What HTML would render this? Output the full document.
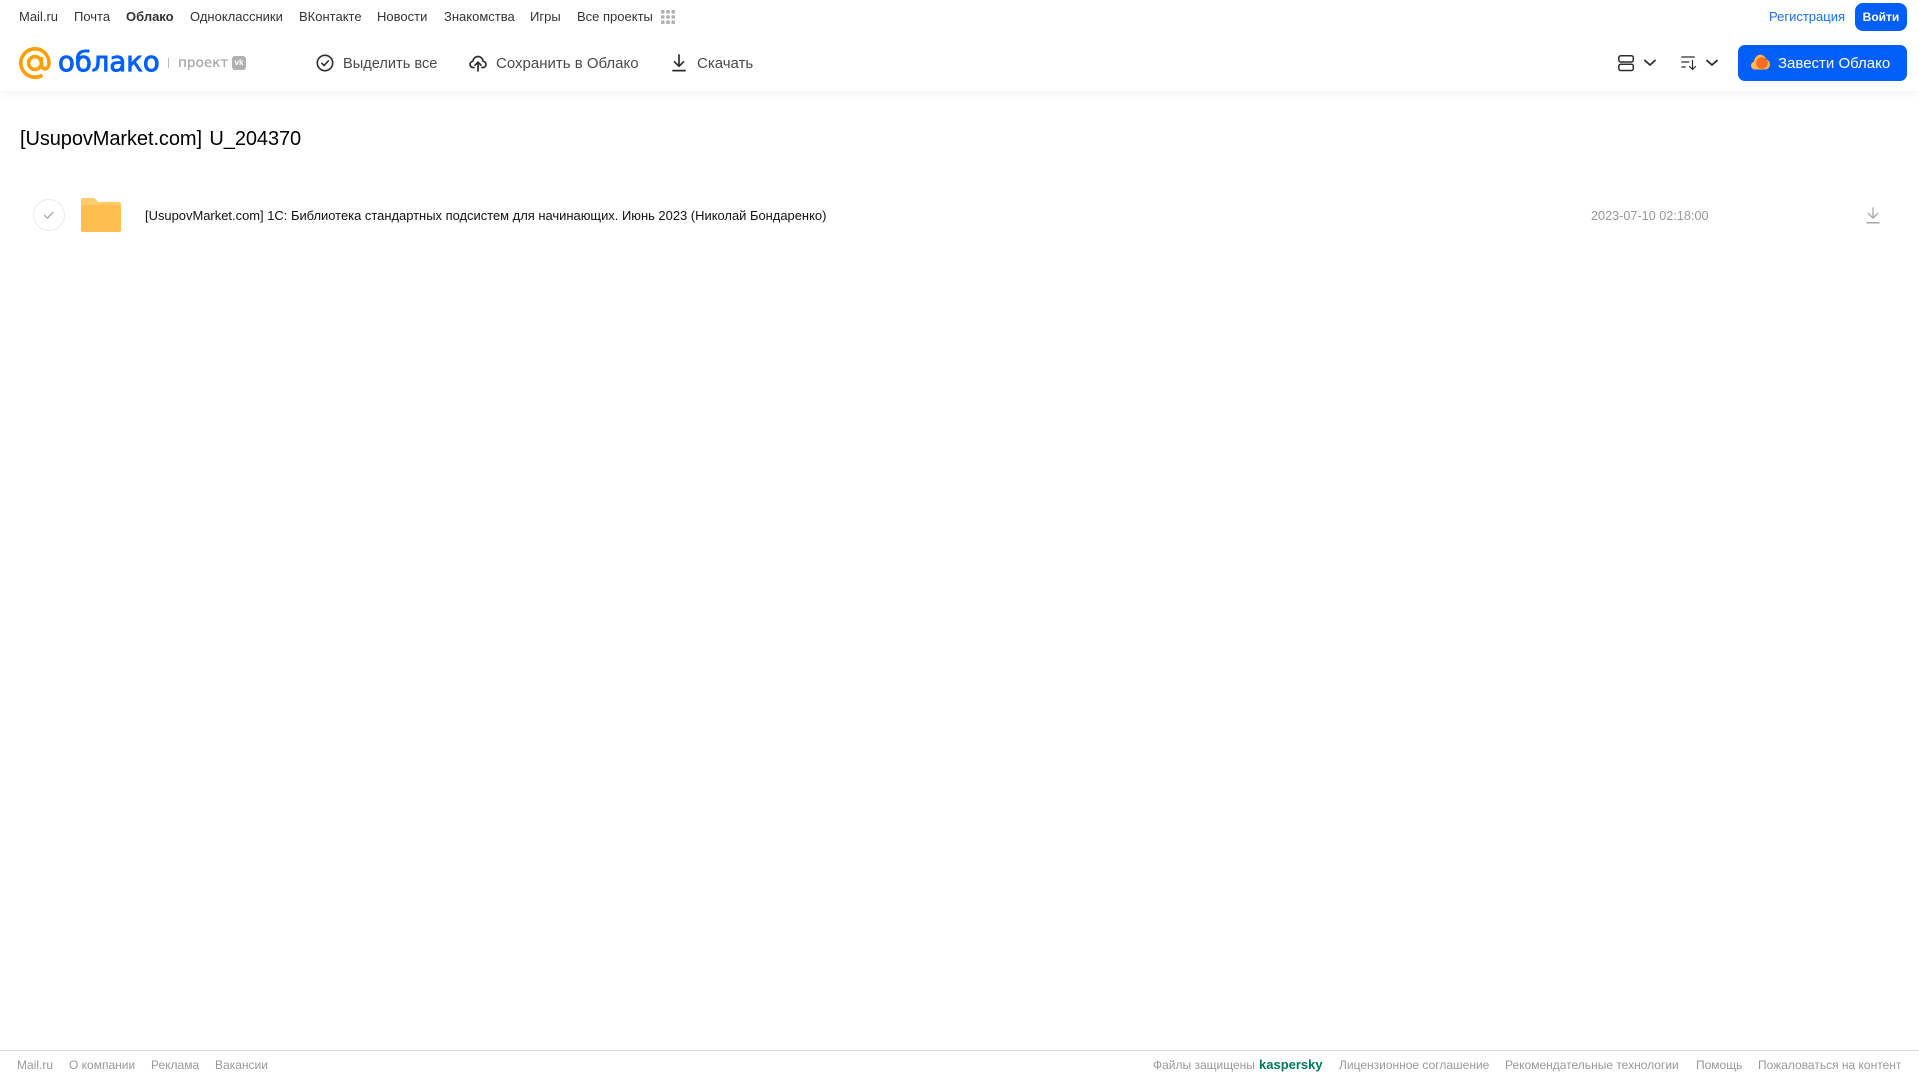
<!DOCTYPE html>
<html lang="ru">
<head>
<meta charset="utf-8">
<title>Облако</title>
<style>
html,body{margin:0;padding:0;background:#fff}
body{width:1919px;height:1079px;position:relative;overflow:hidden;font-family:"Liberation Sans","Noto Sans CJK SC",sans-serif;color:#2c2d2e}
.t{position:absolute;white-space:nowrap;line-height:16px}
.n{font-size:13px;top:9px;color:#333}
.a{font-size:15px;top:56px;color:#4a4a4a;line-height:16px}
.f{font-size:12px;top:1057px;color:#999}
svg{position:absolute;overflow:visible}
#hd{position:absolute;left:0;top:0;width:1919px;height:91px;background:#fff;box-shadow:0 2px 8px rgba(0,0,0,.06)}
</style>
</head>
<body>
<div id="hd"></div>

<span class="t n" style="left:19px">Mail.ru</span>
<span class="t n" style="left:74px">Почта</span>
<span class="t n" style="left:126px;font-weight:bold">Облако</span>
<span class="t n" style="left:190px">Одноклассники</span>
<span class="t n" style="left:299px">ВКонтакте</span>
<span class="t n" style="left:377px">Новости</span>
<span class="t n" style="left:444px">Знакомства</span>
<span class="t n" style="left:530px">Игры</span>
<span class="t n" style="left:577px">Все проекты</span>
<svg style="left:661px;top:10px" width="14" height="14" fill="#b0b0b0">
<rect x="0" y="0" width="3.6" height="3.6" rx="1"/><rect x="5.2" y="0" width="3.6" height="3.6" rx="1"/><rect x="10.4" y="0" width="3.6" height="3.6" rx="1"/>
<rect x="0" y="5.2" width="3.6" height="3.6" rx="1"/><rect x="5.2" y="5.2" width="3.6" height="3.6" rx="1"/><rect x="10.4" y="5.2" width="3.6" height="3.6" rx="1"/>
<rect x="0" y="10.4" width="3.6" height="3.6" rx="1"/><rect x="5.2" y="10.4" width="3.6" height="3.6" rx="1"/><rect x="10.4" y="10.4" width="3.6" height="3.6" rx="1"/>
</svg>

<span class="t n" style="left:1769px;color:#1a6ff5">Регистрация</span>
<div style="position:absolute;left:1855px;top:3px;width:52px;height:28px;background:#005ff9;border-radius:8px;color:#fff;font-size:12px;font-weight:bold;line-height:28px;text-align:center">Войти</div>

<!-- logo -->
<svg style="left:19px;top:47px" width="32" height="32" viewBox="0 0 32 32" fill="none" stroke="#ff9e00" stroke-width="3.6">
<circle cx="16" cy="16" r="6.4"/>
<path d="M22.4 10v7.5c0 2.8 1.6 4.3 3.6 4.3 2.600 0 4-2.600 4-5.800C30 8.200 23.700 1.800 16 1.800S1.800 8.200 1.800 16 8.200 30.200 16 30.200c3 0 5.400-.7 7.500-2"/>
</svg>
<span class="t" style="left:58px;top:46px;font-size:27.5px;line-height:32px;color:#005ff9;font-family:'DejaVu Sans',sans-serif;-webkit-text-stroke:.9px #005ff9">облако</span>
<div style="position:absolute;left:168px;top:58px;width:1px;height:10px;background:#bbb"></div>
<span class="t" style="left:178px;top:55px;font-size:13.6px;color:#a8a8a8;font-family:'DejaVu Sans',sans-serif;-webkit-text-stroke:.25px #a8a8a8">проект</span>
<div style="position:absolute;left:232px;top:56px;width:14px;height:14px;background:#b0b0b0;border-radius:3px;color:#fff;font-size:8px;font-weight:bold;line-height:14px;text-align:center">vk</div>

<!-- actions -->
<svg style="left:316px;top:54px" width="18" height="18" fill="none" stroke="#2c2d2e" stroke-width="1.6" stroke-linecap="round" stroke-linejoin="round">
<circle cx="9" cy="9" r="7.700"/><path d="M5.800 9.300l2.300 2.200 4.200-4.600"/>
</svg>
<span class="t a" style="left:343px;font-size:14.6px">Выделить все</span>
<svg style="left:469px;top:54px" width="18" height="18" fill="none" stroke="#2c2d2e" stroke-width="1.7" stroke-linecap="round" stroke-linejoin="round">
<path d="M5 13.500H4.200C2.300 13.500 1 12.100 1 10.400c0-1.600 1.200-2.900 2.800-3.100C4.300 4.500 6.400 2.500 9 2.500s4.700 2 5.200 4.800c1.600.2 2.800 1.500 2.800 3.100 0 1.700-1.300 3.100-3.200 3.100H13"/>
<path d="M9 17V8.500M6 11.200l3-3 3 3"/>
</svg>
<span class="t a" style="left:496px">Сохранить в Облако</span>
<svg style="left:672px;top:54px" width="14" height="18" fill="none" stroke="#2c2d2e" stroke-width="1.7" stroke-linecap="round" stroke-linejoin="round">
<path d="M7 1v11M2.500 7.800L7 12.300l4.500-4.500"/><path d="M1 16.600h12"/>
</svg>
<span class="t a" style="left:697px">Скачать</span>

<!-- view / sort -->
<svg style="left:1618px;top:54px" width="18" height="18" fill="none" stroke="#2c2d2e" stroke-width="1.5">
<rect x=".8" y="1.700" width="14.500" height="6.300" rx="2"/><rect x=".8" y="10.200" width="14.500" height="6.300" rx="2"/>
</svg>
<svg style="left:1644px;top:59px" width="12" height="8" fill="none" stroke="#2c2d2e" stroke-width="1.8" stroke-linecap="round" stroke-linejoin="round"><path d="M1 1.500l5 4.500 5-4.500"/></svg>
<svg style="left:1681px;top:55px" width="17" height="16" fill="none" stroke="#2c2d2e" stroke-width="1.200" stroke-linecap="round" stroke-linejoin="round">
<path d="M.8 2h12.500M.8 7h7M.8 12h3.500"/><path d="M11.500 5.500v9M8.500 11.500l3 3 3-3"/>
</svg>
<svg style="left:1706px;top:59px" width="12" height="8" fill="none" stroke="#2c2d2e" stroke-width="1.8" stroke-linecap="round" stroke-linejoin="round"><path d="M1 1.500l5 4.500 5-4.500"/></svg>

<div style="position:absolute;left:1738px;top:45px;width:169px;height:36px;background:#005ff9;border-radius:7px"></div>
<svg style="left:1751px;top:54px" width="19" height="16" viewBox="0 0 19 16">
<path d="M4 15.500C1.800 15.500 0 13.800 0 11.600c0-1.800 1.200-3.300 2.900-3.800C3.300 4 6 .8 9.300.8c2.800 0 5.200 1.900 6 4.600 2.100.5 3.700 2.600 3.700 5 0 2.800-2.200 5.100-5 5.100z" fill="#ffb64a"/>
<circle cx="11" cy="9" r="5.800" fill="#f96a22"/>
</svg>
<span class="t" style="left:1778px;top:56px;font-size:15px;color:#fff">Завести Облако</span>

<!-- title -->
<span class="t" style="left:20px;top:126.500px;font-size:20px;line-height:24px;color:#000;word-spacing:2px;letter-spacing:-.08px">[UsupovMarket.com] U_204370</span>

<!-- row -->
<svg style="left:33px;top:199px" width="32" height="32" fill="none">
<circle cx="16" cy="16" r="15.500" stroke="#ececec"/>
<path d="M11.500 16.300l3 2.900 5.500-6" stroke="#a6a6a6" stroke-width="1.300" stroke-linecap="round" stroke-linejoin="round"/>
</svg>
<svg style="left:81px;top:198px" width="40" height="34" viewBox="0 0 40 34">
<path d="M2 0h10c1.500 0 2.300.5 3 1.500L17 4h21c1.100 0 2 .9 2 2v26c0 1.100-.9 2-2 2H2c-1.100 0-2-.9-2-2V2C0 .9.900 0 2 0z" fill="#ffcb6b"/>
<path d="M0 9c0-1.100.9-2 2-2h36c1.100 0 2 .9 2 2v23c0 1.100-.9 2-2 2H2c-1.100 0-2-.9-2-2z" fill="#ffbf50"/>
</svg>
<span class="t" style="left:145px;top:208px;font-size:12.95px;color:#111">[UsupovMarket.com] 1C: Библиотека стандартных подсистем для начинающих. Июнь 2023 (Николай Бондаренко)</span>
<span class="t" style="left:1591px;top:208px;font-size:12.66px;color:#999">2023-07-10 02:18:00</span>
<svg style="left:1866px;top:207px" width="14" height="17" fill="none" stroke="#a8a8a8" stroke-width="1.300" stroke-linecap="round" stroke-linejoin="round">
<path d="M7 .8v10M2.300 6.500L7 11l4.700-4.500"/><path d="M1 15.800h12" stroke-width="1.500"/>
</svg>

<!-- footer -->
<div style="position:absolute;left:0;top:1050px;width:1919px;height:1px;background:#d8d8d8"></div>
<span class="t f" style="left:17px">Mail.ru</span>
<span class="t f" style="left:69px">О компании</span>
<span class="t f" style="left:151px">Реклама</span>
<span class="t f" style="left:215px">Вакансии</span>
<span class="t f" style="left:1153px">Файлы защищены</span>
<span class="t f" style="left:1259px;font-size:13px;font-weight:bold;color:#00795f">kaspersky</span>
<span class="t f" style="left:1339px">Лицензионное соглашение</span>
<span class="t f" style="left:1505px">Рекомендательные технологии</span>
<span class="t f" style="left:1696px">Помощь</span>
<span class="t f" style="left:1758px">Пожаловаться на контент</span>
</body>
</html>
